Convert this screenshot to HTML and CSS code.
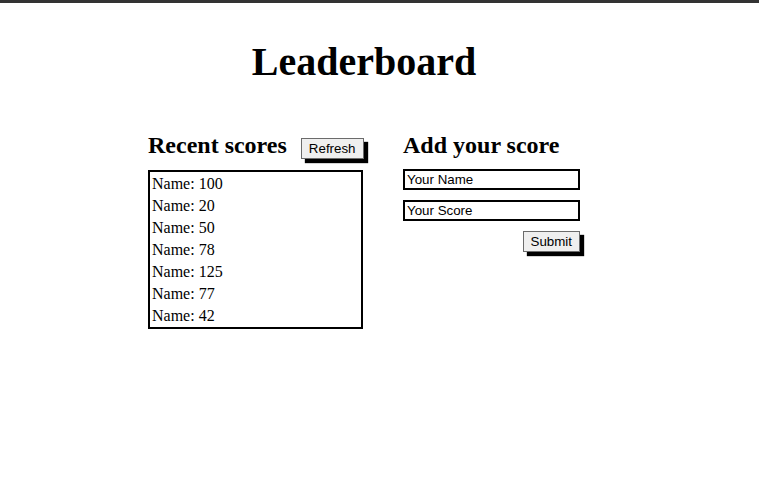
FILE: index.html
```html
<!DOCTYPE html>
<html lang="en">
<head>
<meta charset="utf-8">
<title>Leaderboard</title>
<link rel="stylesheet" href="styles.css">
</head>
<body>
<div class="topbar"></div>
<div class="page">
  <h1 class="title">Leaderboard</h1>
  <div class="columns">
    <section class="col-left">
      <div class="head-row">
        <h2 class="subtitle">Recent scores</h2>
        <button class="btn" type="button">Refresh</button>
      </div>
      <div class="scores">
        <div class="score">Name: 100</div>
        <div class="score">Name: 20</div>
        <div class="score">Name: 50</div>
        <div class="score">Name: 78</div>
        <div class="score">Name: 125</div>
        <div class="score">Name: 77</div>
        <div class="score">Name: 42</div>
      </div>
    </section>
    <section class="col-right">
      <h2 class="subtitle">Add your score</h2>
      <form class="form">
        <input class="field" type="text" placeholder="Your Name">
        <input class="field" type="text" placeholder="Your Score">
        <div class="submit-row">
          <button class="btn" type="button">Submit</button>
        </div>
      </form>
    </section>
  </div>
</div>
</body>
</html>
```

FILE: styles.css
```css
html, body {
  margin: 0;
  padding: 0;
  background: #ffffff;
}

body {
  font-family: "Liberation Serif", "Times New Roman", serif;
  color: #000;
}

.topbar {
  height: 3px;
  background: #333333;
}

.page {
  width: 432px;
  margin-left: 148px;
}

.title {
  margin: 34.5px 0 47.5px;
  font-size: 40px;
  font-weight: bold;
  line-height: normal;
  text-align: center;
}

.columns {
  display: flex;
  align-items: flex-start;
  gap: 40px;
}

.col-left {
  width: 215px;
  flex-shrink: 0;
}

.head-row {
  display: flex;
  align-items: baseline;
  gap: 14px;
  white-space: nowrap;
}

.subtitle {
  margin: 0;
  font-size: 24px;
  font-weight: bold;
  line-height: normal;
  white-space: nowrap;
  flex-shrink: 0;
}

.btn {
  flex-shrink: 0;
  font-family: "Liberation Sans", Arial, sans-serif;
  font-size: 13.333px;
  line-height: normal;
  padding: 2px 7px;
  border: 1px solid #6b6b6b;
  background: #efefef;
  color: #000;
  border-radius: 0;
  box-shadow: 4px 4px 1px #000;
}

.scores {
  margin-top: 11px;
  box-sizing: border-box;
  width: 215px;
  border: 2px solid #000;
  padding: 1px 2px 0;
}

.score {
  font-size: 16px;
  line-height: 22px;
}

.col-right {
  width: 177px;
  flex-shrink: 0;
}

.form {
  margin: 9.5px 0 0;
  display: flex;
  flex-direction: column;
  gap: 10px;
}

.field {
  box-sizing: border-box;
  width: 177px;
  margin: 0;
  font-family: "Liberation Sans", Arial, sans-serif;
  font-size: 13.333px;
  line-height: normal;
  padding: 1px 2px;
  border: 2px solid #000;
  border-radius: 0;
  outline: none;
  color: #000;
}

.field::placeholder {
  color: #000;
  opacity: 1;
}

.submit-row {
  display: flex;
  justify-content: flex-end;
}
```
